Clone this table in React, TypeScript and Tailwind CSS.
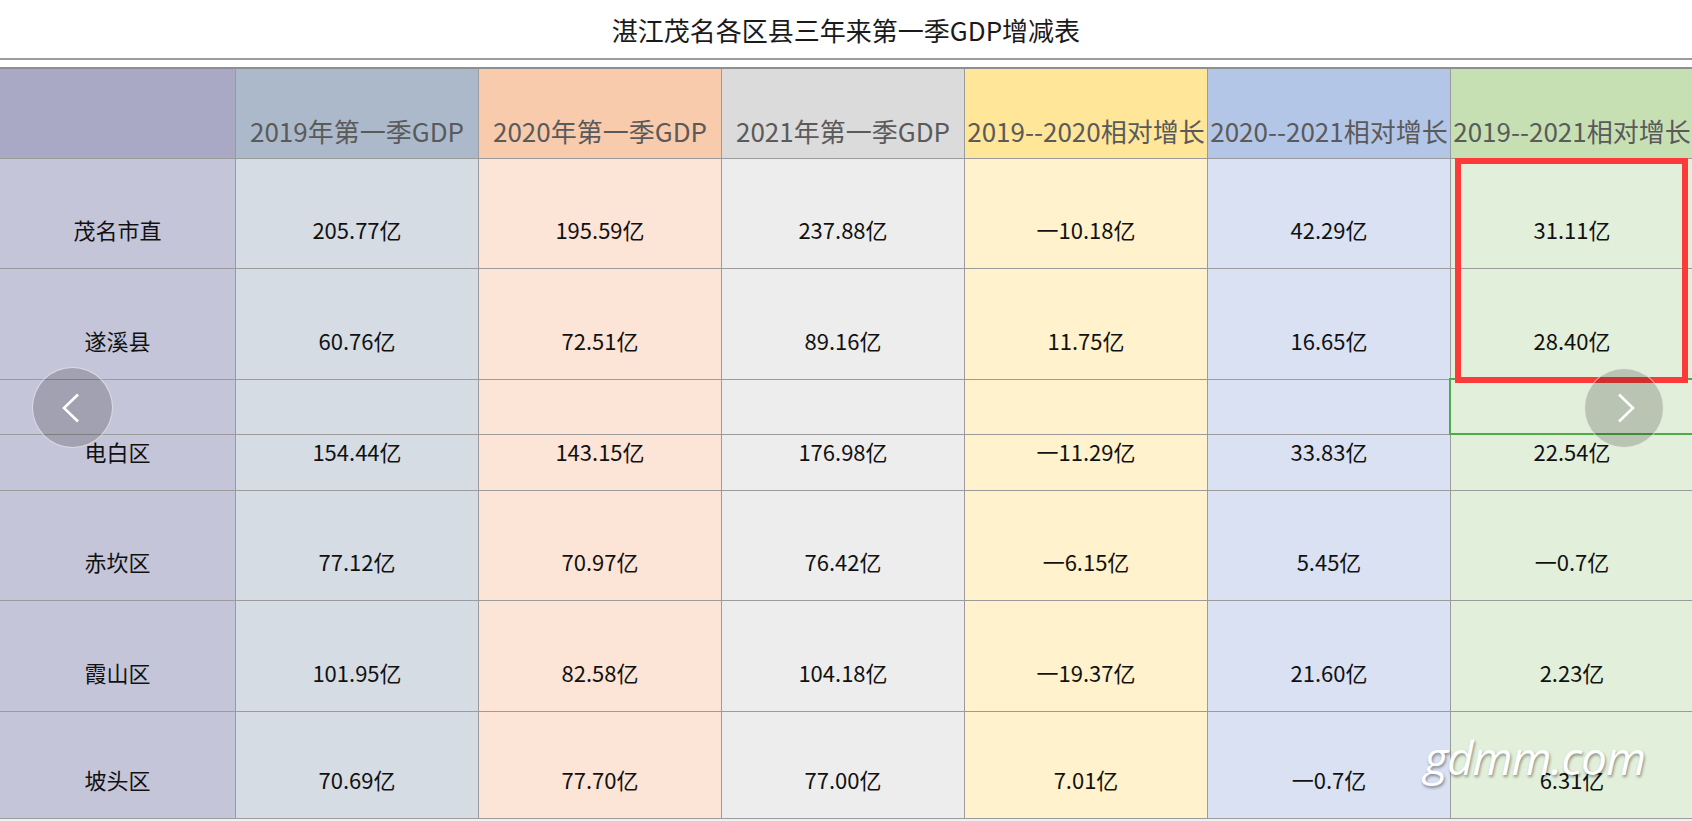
import { ReactNode } from "react";

type Col = { head: string; headBg: string; bodyBg: string; w: string };

const cols: Col[] = [
  { head: "", headBg: "bg-[#a9a9c6]", bodyBg: "bg-[#c5c5d9]", w: "w-[236px]" },
  { head: "2019年第一季GDP", headBg: "bg-[#acb9ca]", bodyBg: "bg-[#d6dce4]", w: "w-[243px]" },
  { head: "2020年第一季GDP", headBg: "bg-[#f8cbad]", bodyBg: "bg-[#fce4d6]", w: "w-[243px]" },
  { head: "2021年第一季GDP", headBg: "bg-[#dbdbdb]", bodyBg: "bg-[#ededed]", w: "w-[243px]" },
  { head: "2019--2020相对增长", headBg: "bg-[#ffe699]", bodyBg: "bg-[#fff2cc]", w: "w-[243px]" },
  { head: "2020--2021相对增长", headBg: "bg-[#b4c6e7]", bodyBg: "bg-[#d9e1f2]", w: "w-[243px]" },
  { head: "2019--2021相对增长", headBg: "bg-[#c6e0b4]", bodyBg: "bg-[#e2efda]", w: "w-[243px]" },
];

// each row: height class + cells (first one is the district name)
const rows: { h: string; cells: string[] }[] = [
  { h: "h-[110px]", cells: ["茂名市直", "205.77亿", "195.59亿", "237.88亿", "一10.18亿", "42.29亿", "31.11亿"] },
  { h: "h-[111px]", cells: ["遂溪县", "60.76亿", "72.51亿", "89.16亿", "11.75亿", "16.65亿", "28.40亿"] },
  { h: "h-[55px]", cells: ["", "", "", "", "", "", ""] },
  { h: "h-[56px]", cells: ["电白区", "154.44亿", "143.15亿", "176.98亿", "一11.29亿", "33.83亿", "22.54亿"] },
  { h: "h-[110px]", cells: ["赤坎区", "77.12亿", "70.97亿", "76.42亿", "一6.15亿", "5.45亿", "一0.7亿"] },
  { h: "h-[111px]", cells: ["霞山区", "101.95亿", "82.58亿", "104.18亿", "一19.37亿", "21.60亿", "2.23亿"] },
  { h: "h-[107px]", cells: ["坡头区", "70.69亿", "77.70亿", "77.00亿", "7.01亿", "一0.7亿", "6.31亿"] },
];

function Cell({ className, children }: { className: string; children?: ReactNode }) {
  return (
    <div
      className={`flex shrink-0 items-end justify-center overflow-hidden whitespace-nowrap border-r border-b border-[#9b9b9b] ${className}`}
    >
      {children}
    </div>
  );
}

function Arrow({ dir }: { dir: "left" | "right" }) {
  return (
    <svg width="18" height="30" viewBox="0 0 18 30" fill="none">
      <polyline
        points={dir === "left" ? "16,1.5 2,15 16,28.5" : "2,1.5 16,15 2,28.5"}
        stroke="white"
        strokeWidth="2.6"
        strokeLinejoin="miter"
      />
    </svg>
  );
}

export default function App() {
  return (
    <div className="relative h-[821px] w-[1692px] overflow-hidden bg-[#eef1f3] font-['Noto_Sans_CJK_SC','Noto_Sans',sans-serif]">
      {/* title bar */}
      <div className="bg-white pb-[7px]">
        <div className="flex h-[60px] items-center justify-center border-b-2 border-[#9c9c9c] pt-[1px] text-[26px] text-[#1a1a1a]">
          湛江茂名各区县三年来第一季GDP增减表
        </div>
      </div>

      {/* table */}
      <div className="w-[1700px] border-t-2 border-[#8f8f8f]">
        <div className="flex">
          {cols.map((c, i) => (
            <Cell
              key={i}
              className={`h-[90px] pb-[10px] text-[26px] leading-[34px] text-[#5a5a5a] ${c.w} ${c.headBg}`}
            >
              {c.head}
            </Cell>
          ))}
        </div>
        {rows.map((r, ri) => (
          <div key={ri} className="flex">
            {r.cells.map((v, ci) => (
              <Cell
                key={ci}
                className={`pb-[24px] text-[22px] leading-[30px] text-[#111] ${r.h} ${cols[ci].w} ${cols[ci].bodyBg}`}
              >
                {v}
              </Cell>
            ))}
          </div>
        ))}
      </div>

      {/* selection outlines */}
      <div className="absolute left-[1449px] top-[378px] h-[57px] w-[260px] border-2 border-[#52a947]" />
      <div className="absolute left-[1455px] top-[158px] h-[225px] w-[233px] border-[6px] border-[#fd3a3a]" />

      {/* carousel arrows */}
      <button
        type="button"
        className="absolute left-[32px] top-[367px] flex h-[81px] w-[81px] items-center justify-center rounded-full border-[1.5px] border-white/60 bg-black/[0.18] pr-[4px]"
      >
        <Arrow dir="left" />
      </button>
      <button
        type="button"
        className="absolute left-[1584px] top-[368px] flex h-[80px] w-[80px] items-center justify-center rounded-full border-[1.5px] border-white/60 bg-black/[0.18] pl-[4px]"
      >
        <Arrow dir="right" />
      </button>

      {/* watermark */}
      <div className="absolute left-[1424px] top-[727px] font-['Open_Sans',sans-serif] text-[46px] italic leading-[60px] tracking-[-1px] text-white [text-shadow:1px_2px_3px_rgba(0,0,0,0.4)]">
        gdmm.com
      </div>
    </div>
  );
}
